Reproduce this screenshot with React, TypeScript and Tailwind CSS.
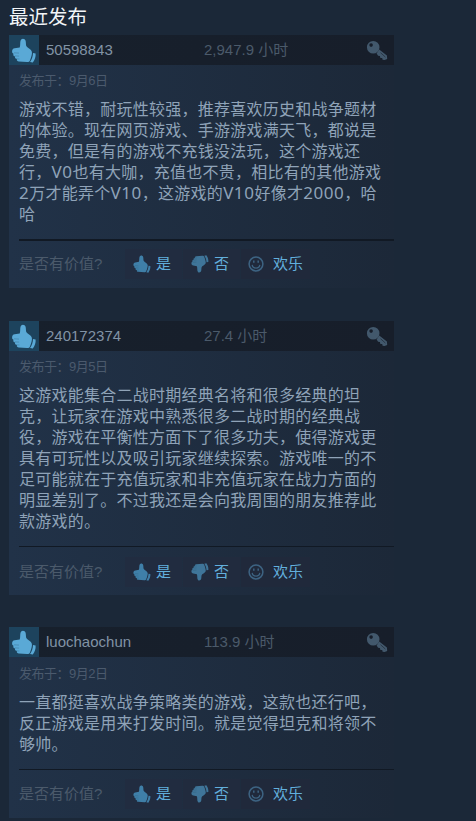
type Review = {
  name: string;
  hours: string;
  date: string;
  lines: string[];
  rule: string;
  size: string;
  body: string;
  foot: string;
};

const reviews: Review[] = [
  {
    name: "50598843",
    hours: "2,947.9 小时",
    date: "9月6日",
    lines: [
      "游戏不错，耐玩性较强，推荐喜欢历史和战争题材",
      "的体验。现在网页游戏、手游游戏满天飞，都说是",
      "免费，但是有的游戏不充钱没法玩，这个游戏还",
      "行，V0也有大咖，充值也不贵，相比有的其他游戏",
      "2万才能弄个V10，这游戏的V10好像才2000，哈",
      "哈",
    ],
    rule: "h-0.5",
    size: "h-[253px] mb-[33px]",
    body: "mt-1.5",
    foot: "mt-[7px]",
  },
  {
    name: "240172374",
    hours: "27.4 小时",
    date: "9月5日",
    lines: [
      "这游戏能集合二战时期经典名将和很多经典的坦",
      "克，让玩家在游戏中熟悉很多二战时期的经典战",
      "役，游戏在平衡性方面下了很多功夫，使得游戏更",
      "具有可玩性以及吸引玩家继续探索。游戏唯一的不",
      "足可能就在于充值玩家和非充值玩家在战力方面的",
      "明显差别了。不过我还是会向我周围的朋友推荐此",
      "款游戏的。",
    ],
    rule: "h-px",
    size: "h-[274px] mb-8",
    body: "mt-1.5",
    foot: "mt-[9px]",
  },
  {
    name: "luochaochun",
    hours: "113.9 小时",
    date: "9月2日",
    lines: [
      "一直都挺喜欢战争策略类的游戏，这款也还行吧，",
      "反正游戏是用来打发时间。就是觉得坦克和将领不",
      "够帅。",
    ],
    rule: "h-px",
    size: "h-[191px]",
    body: "mt-[7px]",
    foot: "mt-2",
  },
];

function Thumb({ className }: { className: string }) {
  return (
    <svg viewBox="2.500 2 24 25" className={className} fill="currentColor">
      <path d="M11.700 3.500c1.300-1.500 3.900-.8 4.400 1.200.5 2.100.2 3.900.7 5.300.6 1.500 3.400 2.500 4.600 4 1 1.200 1.200 2.300 1 3.700-.4 2.700-1.200 5-2.100 7-.5 1.200-1.400 1.500-2.700 1.400l-8.300-.7c-1.400-.2-2.100-.8-2-1.900l.1-.5c-1.400-.2-2-.9-1.900-1.900l.2-.7c-1.400-.3-2-1-1.900-2l.2-.7c-1.100-.4-1.500-1.200-1.400-2.200 0-1.900.9-2.900 2.500-3.200l5.100-.8c1-2.400-.1-6.100 1.500-8z" />
      <path d="M23.500 17l2.600.4c.3 3.300-.8 6.500-2.800 9.100l-2.800-.5c1.900-2.700 2.900-5.800 3-9z" />
      <path d="M4.500 16.800l5 .3M5.300 19.900l4.300.2M6.600 22.900l3.300.1" stroke="#1d435d" strokeWidth=".5" opacity=".5" />
    </svg>
  );
}

function KeyIcon() {
  return (
    <svg viewBox="0 0 22 21" className="h-[21px] w-[22px] text-[#42586c]">
      <path
        fill="currentColor"
        fillRule="evenodd"
        d="M7.200 1a6.300 6.300 0 1 0 0 12.600A6.300 6.300 0 0 0 7.200 1zM5.100 3.300a1.800 1.800 0 1 1 0 3.600 1.800 1.800 0 0 1 0-3.600z"
      />
      <path fill="currentColor" d="M13.200 9.400l7.700 6.200.3 3.300-2.600 1.200-2-.3-.4-1.800-1.800-.1-.5-1.900-1.800-.2-1.500-2.300z" />
      <path stroke="#19212e" strokeWidth=".6" d="M14.500 12.700l4.900 4.400" />
    </svg>
  );
}

function Smile() {
  return (
    <svg viewBox="0 0 16 16" className="h-4 w-4 text-[#3d6382]" fill="none" stroke="currentColor">
      <circle cx="8" cy="8" r="6.900" strokeWidth="1.500" />
      <path d="M4.200 8.800c.5 4.300 7.100 4.300 7.600 0" strokeWidth="1.300" />
      <path d="M5.800 4.500v2.300M10.200 4.500v2.300" strokeWidth="1.500" />
    </svg>
  );
}

// Latin letters and digits are set slightly larger than the Chinese text around them.
function Line({ text }: { text: string }) {
  return (
    <p className="h-[21px] leading-[21px]">
      {text.split(/([A-Z0-9]+)/).map((part, i) =>
        i % 2 === 1 ? (
          <span key={i} className="text-[17px] leading-none tracking-[0.55px]">
            {part}
          </span>
        ) : (
          part
        ),
      )}
    </p>
  );
}

function Card({ review }: { review: Review }) {
  return (
    <article className={`flex w-[385px] flex-col bg-linear-to-r from-[#213248] to-[#1c2838] ${review.size}`}>
      <header className="flex h-[30px] shrink-0 items-center bg-linear-to-r from-[#17202c] to-[#171e2a]">
        <div className="flex size-[30px] items-center justify-center bg-[#1d435d]">
          <Thumb className="h-[25px] w-6 text-[#5aa9d6]" />
        </div>
        <span className="ml-[7px] w-[158px] text-[15px] text-[#8193a5]">{review.name}</span>
        <span className="text-[15px] text-[#4b5a6a]">{review.hours}</span>
        <span className="mr-1.5 ml-auto">
          <KeyIcon />
        </span>
      </header>
      <div className={`ml-2.5 h-5 text-[13px] leading-5 tracking-[-0.5px] text-[#4b5a6d] ${review.body}`}>
        发布于：{review.date}
      </div>
      <div className="mt-2 ml-2.5 font-['Noto_Sans','Noto_Sans_CJK_SC',sans-serif] text-[16px] tracking-[0.25px] whitespace-nowrap text-[#8fa3b8]">
        {review.lines.map((line) => (
          <Line key={line} text={line} />
        ))}
      </div>
      <div className={`mt-3.5 ml-2.5 shrink-0 bg-[#111924] ${review.rule}`} />
      <footer className={`ml-2.5 flex h-8 items-center text-[15px] text-[#62afdc] ${review.foot}`}>
        <span className="w-[106px] text-[#4b5a6b]">是否有价值?</span>
        <span className="flex h-[30px] w-[57px] items-center bg-[#212c40] pl-2">
          <Thumb className="mr-[5px] h-[18px] w-[18px] text-[#3f7fa8]" />是
        </span>
        <span className="ml-px flex h-[30px] w-[57px] items-center bg-[#212b3e] pl-2">
          <Thumb className="mr-[5px] h-[18px] w-[18px] -scale-y-100 text-[#3f7599]" />否
        </span>
        <span className="ml-px flex h-[30px] w-[69px] items-center bg-[#20293b] pl-[7px]">
          <Smile />
          <span className="ml-[9px]">欢乐</span>
        </span>
      </footer>
    </article>
  );
}

export default function App() {
  return (
    <main className="h-[821px] w-[476px] overflow-hidden bg-[#1b2838] pl-[9px] font-['Liberation_Sans','Noto_Sans_CJK_SC',sans-serif]">
      <h1 className="h-[35px] text-[19.5px] leading-[35px] text-[#f2f5f8]">最近发布</h1>
      {reviews.map((review) => (
        <Card key={review.name} review={review} />
      ))}
    </main>
  );
}
